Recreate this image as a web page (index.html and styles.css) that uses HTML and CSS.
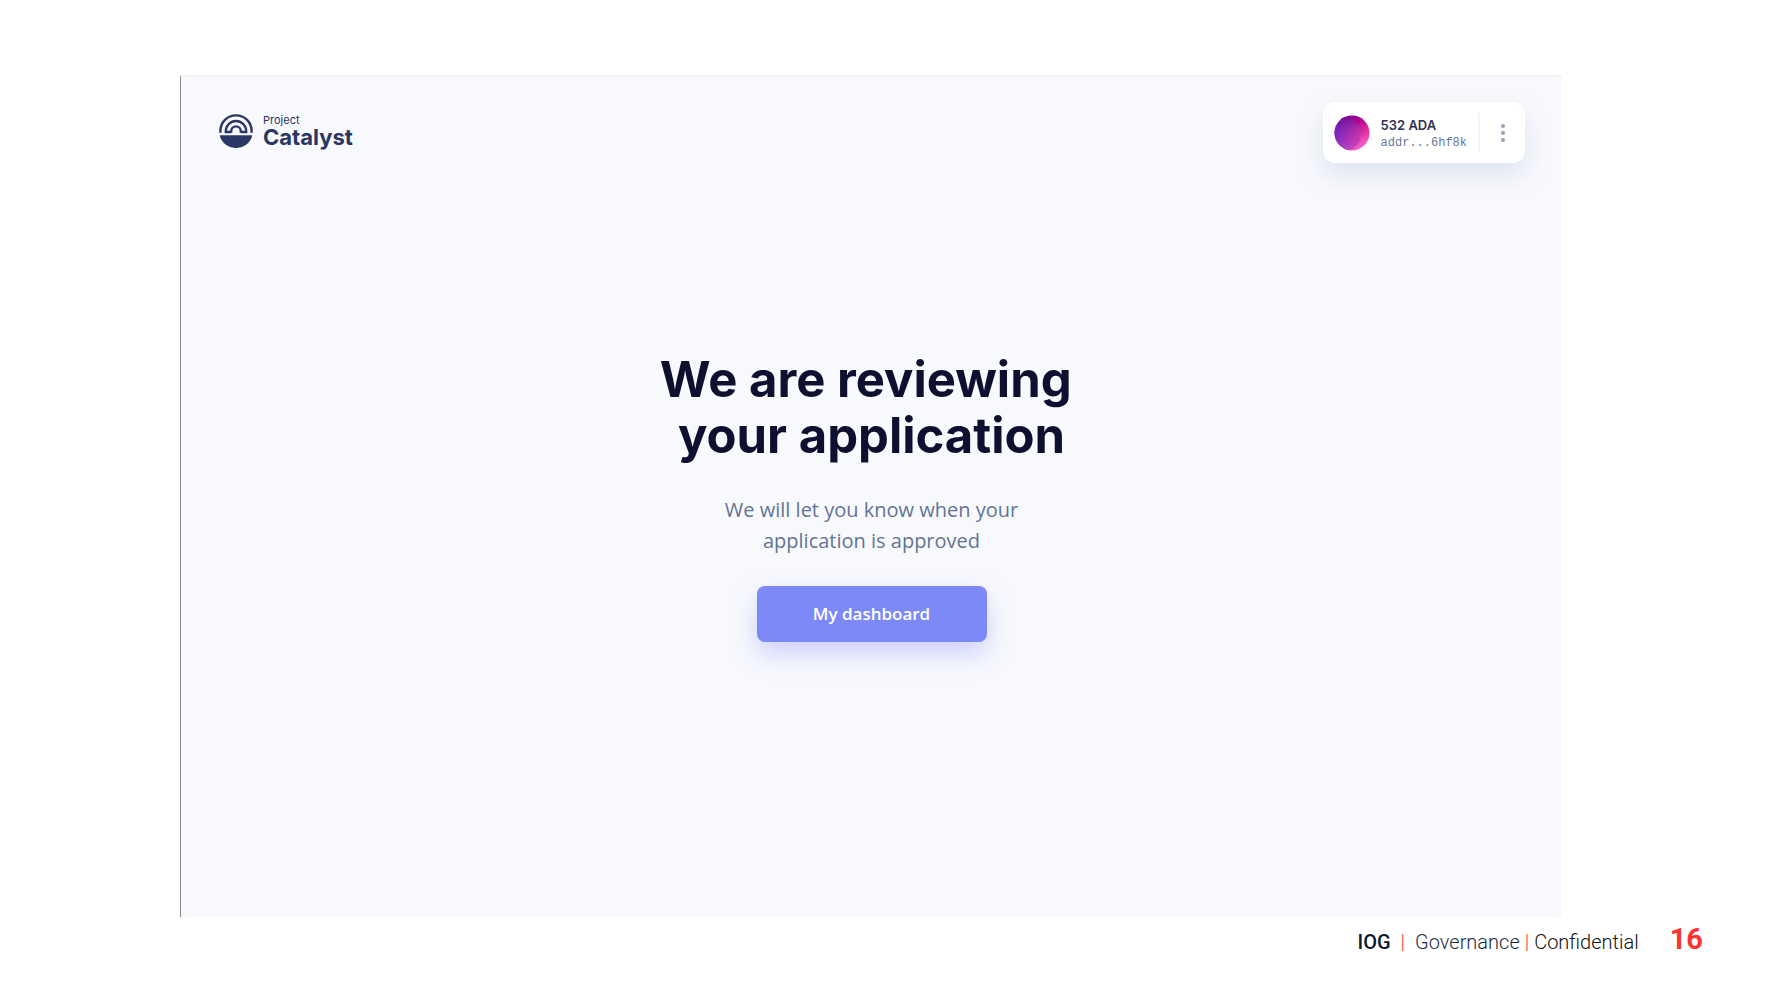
FILE: index.html
```
<!DOCTYPE html>
<html lang="en">
<head>
<meta charset="utf-8">
<meta name="viewport" content="width=device-width, initial-scale=1">
<title>Project Catalyst</title>
<link rel="stylesheet" href="styles.css">
</head>
<body>
<div class="screen">
  <header class="topbar">
    <a class="brand" href="#">
      <svg class="brand-mark" viewBox="0 0 34 34" aria-hidden="true">
        <path d="M.6 21.2h32.8A16.9 16.9 0 0 1 .6 21.2z" fill="#2a3663"/>
        <g fill="none" stroke="#2a3663" stroke-width="2.4">
          <path d="M1.4 18.8V17a15.6 15.6 0 0 1 31.2 0v1.8"/>
          <path d="M12.2 18H6.8v-.8a10.2 10.2 0 0 1 20.4 0v.8h-5.4"/>
          <path d="M12.2 18.8v-1.6a4.8 4.8 0 0 1 9.6 0v1.6"/>
        </g>
      </svg>
      <span class="brand-name"><span class="brand-small">Project</span><span class="brand-large">Catalyst</span></span>
    </a>
    <div class="wallet">
      <svg class="avatar" viewBox="0 0 36 36" aria-hidden="true">
        <defs>
          <linearGradient id="disc" x1=".2" y1="0" x2=".7" y2="1"><stop offset="0" stop-color="#6a0090"/><stop offset=".35" stop-color="#b8058f"/><stop offset=".7" stop-color="#e93aa6"/><stop offset="1" stop-color="#f46cd6"/></linearGradient>
          <linearGradient id="shade" x1="0" y1=".4" x2="1" y2=".6"><stop offset=".3" stop-color="#6a30cc"/><stop offset=".6" stop-color="#9b35b9"/><stop offset="1" stop-color="#cf35ab"/></linearGradient>
          <linearGradient id="veil" x1=".5" y1="0" x2=".6" y2="1"><stop offset="0" stop-color="#6a0080" stop-opacity=".7"/><stop offset=".5" stop-color="#8a20b0" stop-opacity=".1"/><stop offset="1" stop-color="#c060e0" stop-opacity=".4"/></linearGradient>
          <clipPath id="round"><circle cx="18" cy="18" r="17.5"/></clipPath>
        </defs>
        <g clip-path="url(#round)">
          <rect width="36" height="36" fill="url(#disc)"/>
          <circle cx="10" cy="19" r="17" fill="url(#shade)" opacity=".8"/>
          <circle cx="10" cy="19" r="17" fill="url(#veil)"/>
        </g>
      </svg>
      <div class="account"><span class="balance">532 ADA</span><span class="address">addr...6hf8k</span></div>
      <button class="more" type="button" aria-label="Wallet menu">
        <svg width="4" height="18" viewBox="0 0 4 18" fill="#96a2bc" aria-hidden="true"><circle cx="2" cy="2" r="2"/><circle cx="2" cy="9" r="2"/><circle cx="2" cy="16" r="2"/></svg>
      </button>
    </div>
  </header>
  <main class="status">
    <h1 class="title">We are reviewing 
your application</h1>
    <p class="message">We will let you know when your<br>application is approved</p>
    <button class="primary" type="button">My dashboard</button>
  </main>
</div>
<footer class="footer">
  <strong class="org">IOG</strong><span class="bar">|</span><span class="dept">Governance</span><span class="bar bar-tight">|</span><span class="class">Confidential</span><span class="page">16</span>
</footer>
</body>
</html>
```
FILE: styles.css
```
* { box-sizing: border-box; }
body {
  margin: 0;
  min-height: 100vh;
  display: flex;
  flex-direction: column;
  background: #fff;
  font-family: "Open Sans", sans-serif;
}
button { border: 0; cursor: pointer; font-family: inherit; }
.screen {
  flex: 1;
  margin: 75px 205px 0 180px;
  background: #f8f9fd;
  border-top: 2px solid #f1f2f6;
  border-left: 1px solid #85868b;
}
.topbar {
  display: flex;
  justify-content: space-between;
  align-items: center;
  padding: 25px 37px 0 38px;
}
.brand {
  display: flex;
  align-items: center;
  gap: 10px;
  margin-bottom: 4px;
  color: #2a3663;
  text-decoration: none;
  font-family: Inter, sans-serif;
}
.brand-mark { width: 34px; height: 34px; }
.brand-name { display: flex; flex-direction: column; }
.brand-small { font-size: 11px; line-height: 13px; }
.brand-large { font-size: 22px; line-height: 20px; font-weight: 700; }
.wallet {
  display: flex;
  align-items: center;
  height: 61px;
  padding-left: 11px;
  border-radius: 12px;
  background: #fff;
  box-shadow: 0 12px 24px rgba(190, 202, 225, .45);
}
.avatar { width: 36px; height: 36px; }
.account {
  display: flex;
  flex-direction: column;
  padding: 2px 11px 0;
}
.balance {
  font: 600 13px/18px Inter, sans-serif;
  color: #2f3250;
}
.address {
  font: 12px/18px "Liberation Mono", monospace;
  color: #66779b;
}
.more {
  display: flex;
  justify-content: center;
  align-items: center;
  width: 47px;
  height: 39px;
  border-left: 2px solid #f3f5fb;
  background: none;
  padding: 0;
}
.status {
  display: flex;
  flex-direction: column;
  align-items: center;
  padding-top: 189px;
  text-align: center;
}
.title {
  margin: 0;
  font: 700 49px/56px Inter, sans-serif;
  color: #0d112f;
  white-space: pre;
}
.message {
  margin: 30px 0;
  font-size: 20px;
  line-height: 31px;
  color: #647493;
}
.primary {
  width: 230px;
  height: 56px;
  border-radius: 8px;
  background: #7d89f7;
  color: #fff;
  font-size: 17px;
  font-weight: 600;
  padding: 0 0 2px;
  box-shadow: 0 12px 24px rgba(125, 137, 247, .35);
}
.footer {
  display: flex;
  align-items: baseline;
  justify-content: flex-end;
  height: 72px;
  padding: 6px 64px 0 0;
  font: 300 20px/32px Roboto, sans-serif;
  color: #111;
}
.org { font-weight: 500; color: #0a1a30; }
.bar { color: #f3403e; margin: 0 10px; }
.bar-tight { margin: 0 5px; }
.dept { color: #1c2c40; }
.page {
  margin-left: 31px;
  font-size: 29px;
  font-weight: 700;
  color: #fa3531;
}
```
